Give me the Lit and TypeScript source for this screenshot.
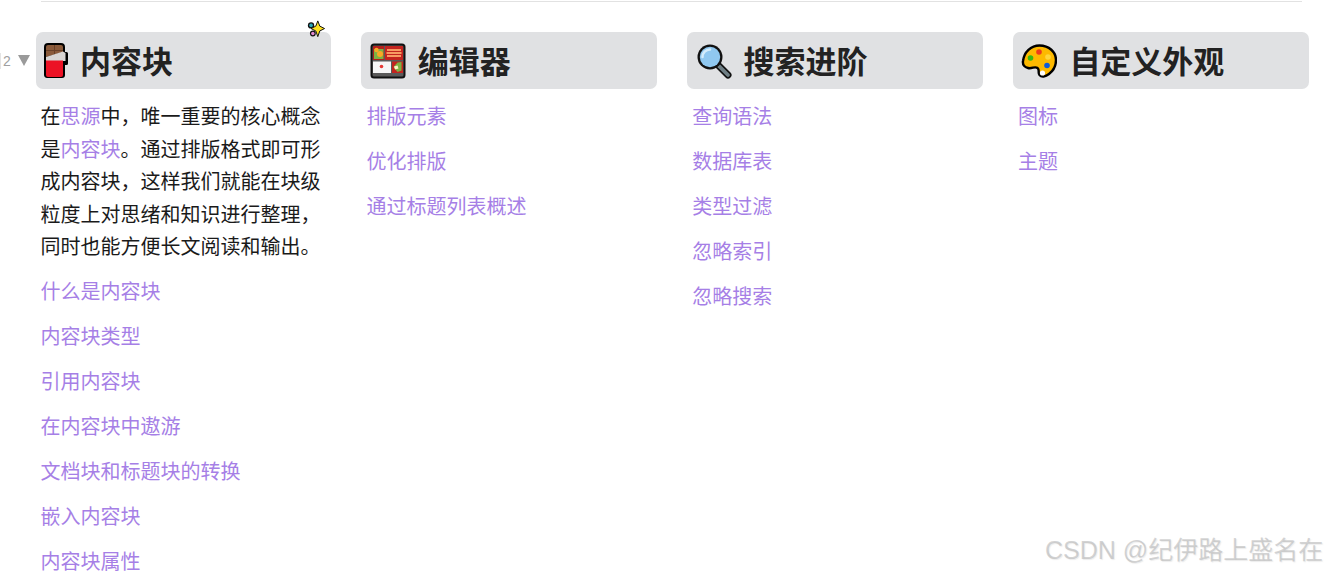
import { LitElement, html, css, svg } from "lit";
import { customElement } from "lit/decorators.js";

const chocolate = svg`<svg class="ico choc" viewBox="0 0 25 36" width="25" height="36">
  <path d="M4 0h13a4 4 0 0 1 4 4v5h1.500a1.500 1.500 0 0 1 1.500 1.500v10a1.500 1.500 0 0 1-1.500 1.500H21v10a3 3 0 0 1-3 3H3.500A3 3 0 0 1 0 32V4a4 4 0 0 1 4-4z" fill="#000"/>
  <path d="M4 2h13a2 2 0 0 1 2 2v5L2 14V4a2 2 0 0 1 2-2z" fill="#8a5a3a"/>
  <path d="M10.500 2v9M2 7.500h17" stroke="#6a4128" stroke-width="1" fill="none"/>
  <path d="M19 8.500L2 14v4h19.500v-8z" fill="#d8d5d3"/>
  <path d="M2 17.500h17V32a2 2 0 0 1-2 2H4a2 2 0 0 1-2-2z" fill="#ec1225"/>
</svg>`;

const bento = svg`<svg class="ico" viewBox="0 0 36 36" width="36" height="36">
  <rect x="0.500" y="0.500" width="35" height="35" rx="3.500" fill="#111"/>
  <rect x="2.500" y="2.500" width="31" height="31" rx="1.500" fill="#5a5a5a"/>
  <rect x="3" y="3" width="11" height="14" fill="#b3201c"/>
  <rect x="4" y="6" width="9.500" height="10" fill="#7cb342"/>
  <circle cx="6.500" cy="7" r="2.200" fill="#f9a825"/><circle cx="10" cy="11" r="3" fill="#f9a825"/>
  <rect x="15" y="3" width="18" height="14" fill="#c3241f"/>
  <path d="M17 7h14M16.500 10h15M17 13h14" stroke="#f79a62" stroke-width="2"/>
  <rect x="3" y="18.500" width="18" height="11.500" fill="#f6f6f6"/>
  <circle cx="11.500" cy="23.500" r="1.800" fill="#e53935"/>
  <rect x="22" y="18.500" width="11" height="11.500" fill="#c3241f"/>
  <path d="M23.500 24l4-4.500 4-.5v8.500l-4 1.500z" fill="#7cb342"/><path d="M24 23.500l3.500-1 1 3-3.500 1z" fill="#fff3c4"/>
</svg>`;

const magnifier = svg`<svg class="ico" viewBox="0 0 36 36" width="36" height="36">
  <path d="M23 23l9 9" stroke="#111" stroke-width="7" stroke-linecap="round"/>
  <path d="M23 23l9 9" stroke="#6f7f85" stroke-width="3.800" stroke-linecap="round"/>
  <circle cx="14" cy="14" r="12.500" fill="#111"/>
  <circle cx="14" cy="14" r="10.200" fill="#90c8f0"/>
  <path d="M6.500 14a7.500 7.500 0 0 1 7.500-7.500" stroke="#d4ecfb" stroke-width="2.500" fill="none" stroke-linecap="round"/>
</svg>`;

const palette = svg`<svg class="ico" viewBox="0 0 36 36" width="36" height="36">
  <path d="M18.500 2.500C28 2.500 35 9 35 17c0 6-3 11-7 14-3.500 2.800-7.500 3.500-9.500 1-2-2.500.5-5-2-7-2.500-2-5.500 1-9.500 0C3 24 1.500 21.500 2 18 3 9 10 2.500 18.500 2.500z" fill="#fdb900" stroke="#000" stroke-width="2.400" stroke-linejoin="round"/>
  <circle cx="9.500" cy="15" r="2.800" fill="#3ab80f"/>
  <circle cx="18" cy="9" r="2.800" fill="#ec3b1d"/>
  <circle cx="27" cy="14" r="2.800" fill="#ffd53b"/>
  <circle cx="26" cy="22.500" r="2.800" fill="#0f5bd8"/>
  <circle cx="21.500" cy="30" r="2.600" fill="#fff"/>
</svg>`;

const sparkle = svg`<svg class="spark" viewBox="0 0 20 20" width="18" height="18">
  <circle cx="4.500" cy="6" r="3.500" fill="#111"/><circle cx="4.500" cy="6" r="2" fill="#2aa7b8"/>
  <circle cx="6.500" cy="15" r="3.200" fill="#111"/><circle cx="6.500" cy="15" r="1.900" fill="#e58bd0"/>
  <path d="M12 1l2.200 5.800 5.300 2.700-5.300 2.700-2.200 6.300-2.200-6.300-5.300-2.700 5.300-2.700z" fill="#fde021" stroke="#111" stroke-width="1.100" stroke-linejoin="round"/>
</svg>`;

const cols = [
  { icon: chocolate, title: "内容块", links: ["什么是内容块", "内容块类型", "引用内容块", "在内容块中遨游", "文档块和标题块的转换", "嵌入内容块", "内容块属性"] },
  { icon: bento, title: "编辑器", links: ["排版元素", "优化排版", "通过标题列表概述"] },
  { icon: magnifier, title: "搜索进阶", links: ["查询语法", "数据库表", "类型过滤", "忽略索引", "忽略搜索"] },
  { icon: palette, title: "自定义外观", links: ["图标", "主题"] },
];

@customElement("app-root")
export class AppRoot extends LitElement {
  static styles = css`
    :host {
      display: block;
      position: relative;
      width: 1326px;
      height: 572px;
      overflow: hidden;
      background: #fff;
      font-family: "Noto Sans CJK SC", "Noto Sans", sans-serif;
      color: #1f1f1f;
    }
    .rule {
      height: 1px;
      background: #e2e2e2;
      margin: 1px 24px 0 41px;
    }
    .grid {
      display: grid;
      grid-template-columns: repeat(4, 295.8px);
      gap: 30px;
      padding: 30px 0 0 35.6px;
    }
    .col { position: relative; }
    .head {
      display: flex;
      align-items: center;
      gap: 12px;
      height: 57px;
      box-sizing: border-box;
      padding-left: 8.4px;
      background: #e0e1e3;
      border-radius: 7px;
      font-size: 31px;
      font-weight: 700;
      color: #222;
      line-height: 1;
    }
    .head span { margin-top: -2px; }
    .ico { flex: none; }
    .choc { margin-right: -1px; }
    .body { padding: 11px 5px 0; font-size: 20px; }
    p {
      margin: 0 0 12px;
      line-height: 32.5px;
      color: #1a1a1a;
    }
    a { color: #a67fe6; text-decoration: none; }
    .link { display: block; height: 45px; line-height: 32.5px; }
    .spark { position: absolute; top: -12px; right: 6px; }
    .num {
      position: absolute;
      left: 0;
      top: 53px;
      padding-left: 2px;
      border-left: 1px solid #e4e4e4;
      font: 14px "Liberation Sans", sans-serif;
      color: #a0a0a0;
    }
    .tri {
      position: absolute;
      left: 18px;
      top: 55px;
      width: 0;
      height: 0;
      border-left: 6.5px solid transparent;
      border-right: 6.5px solid transparent;
      border-top: 11px solid #9a9a9a;
    }
    .mark {
      position: absolute;
      left: 1045px;
      top: 531px;
      font-size: 25px;
      line-height: 34px;
      color: rgba(170, 170, 170, 0.5);
      text-shadow: 1px 1px 1px rgba(200, 200, 200, 0.35);
      white-space: nowrap;
    }
    .mark .l { font-family: "Liberation Sans", sans-serif; }
  `;

  render() {
    return html`
      <div class="rule"></div>
      <span class="num">2</span><span class="tri"></span>
      <div class="grid">
        ${cols.map((c, i) => html`
          <section class="col">
            ${i === 0 ? sparkle : ""}
            <div class="head">${c.icon}<span>${c.title}</span></div>
            <div class="body">
              ${i === 0 ? html`<p>在<a href="#">思源</a>中，唯一重要的核心概念是<a href="#">内容块</a>。通过排版格式即可形成内容块，这样我们就能在块级粒度上对思绪和知识进行整理，同时也能方便长文阅读和输出。</p>` : ""}
              ${c.links.map((l) => html`<a class="link" href="#">${l}</a>`)}
            </div>
          </section>`)}
      </div>
      <div class="mark"><span class="l">CSDN @</span>纪伊路上盛名在</div>
    `;
  }
}
